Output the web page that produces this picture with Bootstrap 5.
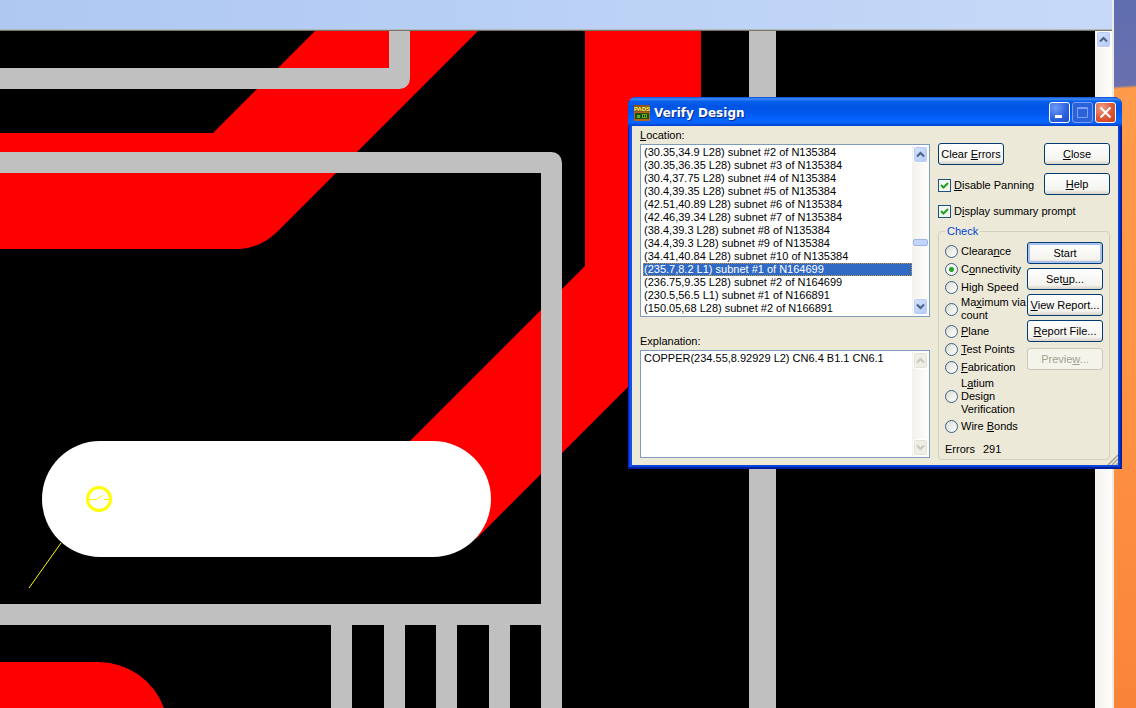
<!DOCTYPE html>
<html lang="en">
<head>
<meta charset="utf-8">
<meta name="viewport" content="width=device-width, initial-scale=1">
<title>Verify Design</title>
<link href="https://cdn.jsdelivr.net/npm/bootstrap@5.3.0/dist/css/bootstrap.min.css" rel="stylesheet">
<style>
:root { --face: #ece9d8; --ink: #000; --edge: #7f9db9; }
body { font: 11px/13px "Liberation Sans", Arial, sans-serif; color: var(--ink); background: #000; }
.toolbar-strip { height: 31px; background: linear-gradient(90deg, #aec8f2, #c6d9f8); border-bottom: 1px solid #77756c; box-shadow: inset 0 -1px #b5b8b8; }
.board { background: #000; min-width: 0; }
.desktop { width: 22px; background: linear-gradient(176deg, #5f6eaf 0, #6a6fae 86px, #ff9b4b 89px, #ff9445 50%, #f98438 100%); }
.app-frame { border-right: 2px solid #ecebe6; }

/* scroll bars */
.sbar { width: 17px; padding: 0 1px; background: linear-gradient(90deg, #f3f1ec, #fefefb); }
.sbar button { width: 15px; height: 17px; padding: 0; border: 1px solid #fff; border-radius: 3px; background: linear-gradient(135deg, #d6e3fd, #b4c9f6); box-shadow: inset 0 0 0 1px #b9cbf3; display: flex; align-items: center; justify-content: center; }
.sbar button:disabled { background: #efeee6; box-shadow: inset 0 0 0 1px #e4e2d8; }
.sbar svg { stroke: #4d6185; }
.sbar button:disabled svg { stroke: #c9c7ba; }
.thumb { height: 7px; background: #c3d5fc; border: 1px solid #9fb5e6; border-radius: 2px; }

/* dialog window */
.dialog-win { top: 97px; right: 14px; width: 494px; border-radius: 8px 8px 0 0; padding: 0 4px 4px; background: linear-gradient(90deg, #0019cf, #1660f0 3px, #0a45d8 4px, #0a45d8 calc(100% - 4px), #0a3fe0 calc(100% - 3px), #00138c); box-shadow: inset 0 -2px #001ea0; }
.title-strip { height: 29px; margin: 0 -4px; padding: 2px 6px 0; border-radius: 8px 8px 0 0; background: linear-gradient(#0a4ad0 0, #3f8cf8 2px, #0a62ec 4px, #0054e3 9px, #0258ee 16px, #0566ff 24px, #0560f8 26px, #0040c8 29px); }
.title-strip h1 { font: bold 12px/16px "DejaVu Sans", sans-serif; color: #fff; text-shadow: 1px 1px #0a2a80; }
.cap-group { gap: 2px; }
.cap { width: 21px; height: 21px; padding: 0; border: 1px solid #fff; border-radius: 3px; background: radial-gradient(circle at 30% 25%, #6e9bf5, #2a5fe0 60%, #1c4ed0); display: flex; align-items: center; justify-content: center; }
.cap:disabled { background: #2a62dc; border-color: #7e9ff0; }
.cap-close { background: radial-gradient(circle at 30% 25%, #f0a088, #e05a38 50%, #c83c18); }
.face { background: var(--face); padding: 3px 8px 5px; column-gap: 8px; }
.list-col { flex: 1 1 0; min-width: 0; }
.right-col { width: 172px; }
.loc-label { height: 15px; }
.expl-label { padding: 18px 0 2px; }
.sunk { background: #fff; border: 1px solid var(--edge); padding: 1px 0 1px 2px; }
.sunk select, .sunk textarea { flex: 1 1 0; min-width: 0; border: 0; padding: 0; margin: 0; outline: 0; background: #fff; color: #000; font: inherit; overflow: hidden; resize: none; border-radius: 0; }
.sunk select { height: 169px; scrollbar-width: none; }
.sunk select::-webkit-scrollbar { display: none; }
.sunk option { padding: 0 1px; height: 13px; min-height: 13px; line-height: 13px; }
.sunk option:checked { background: linear-gradient(#316ac5, #316ac5); -webkit-text-fill-color: #fff; outline: 1px dotted #c8963c; outline-offset: -1px; }
.sunk textarea { height: 104px; padding: 0 1px; }
.xp-btn { height: 22px; padding: 0; font: inherit; color: #000; border: 1px solid #003c74; border-radius: 3px; background: linear-gradient(#fff, #f4f3ee 80%, #d8d2c6); white-space: nowrap; }
.xp-btn.is-default { box-shadow: inset 0 0 0 2px #a9c2f0; }
.xp-btn:disabled { color: #a1a192; border-color: #c9c7ba; background: #f5f4ea; }
.w-top { width: 66px; }
.top-row { padding-top: 14px; }
.chk { column-gap: 3px; white-space: nowrap; }
.chk-pan { margin-top: 14px; }
.chk-sum { margin-top: 10px; }
.tick { appearance: none; flex: none; width: 13px; height: 13px; margin: 0; border: 1px solid #1c5180; background: #f3f3ee; }
input.tick:checked { background: #f3f6f1 url("data:image/svg+xml,%3Csvg xmlns='http://www.w3.org/2000/svg' viewBox='0 0 11 11'%3E%3Cpath d='M2 5l2.500 2.500 4.500-4.500' fill='none' stroke='%2321a121' stroke-width='2'/%3E%3C/svg%3E") center/11px; }
.dot { appearance: none; flex: none; width: 13px; height: 13px; margin: 0; border: 1px solid #3b5f87; border-radius: 50%; background: linear-gradient(135deg, #dcdcd4, #fff); }
.dot:checked { background: radial-gradient(circle, #21a121 2px, #f5f5f1 3px); }
.check-set { border: 1px solid #d0d0bf; border-radius: 4px; padding: 0 6px 2px; margin-top: 7px; height: 235px; }
.check-set legend { float: none; width: auto; font: inherit; color: #0046d5; margin: 0 0 4px; padding: 0 2px; height: 13px; }
.opt { min-height: 18px; column-gap: 3px; white-space: nowrap; }
.opt-tall { padding: 1px 0; }
.cmds { width: 76px; row-gap: 4px; }
.cmd-last { margin-top: 2px; }
.names { flex: 1 1 0; min-width: 0; }
.grip { right: 4px; bottom: 4px; }
</style>
</head>
<body class="vh-100 overflow-hidden">
<div class="d-flex h-100">
  <main class="app-frame d-flex flex-column flex-grow-1">
    <div class="toolbar-strip flex-shrink-0"></div>
    <div class="d-flex flex-grow-1 overflow-hidden">
      <div class="board flex-grow-1 overflow-hidden">
        <svg class="d-block w-100 h-100" viewBox="0 31 1095 677" preserveAspectRatio="xMinYMin slice" aria-label="Board layout">
          <g fill="#f00">
            <path d="M0 133H213L315 31H478L277 232Q260 248 240 249H0Z"/>
            <path d="M585 31H701V314L476 539L393 458L585 266Z"/>
            <path d="M0 662H98A70 70 0 0 1 164 708H0Z"/>
          </g>
          <g fill="none" stroke="#c0c0c0" stroke-width="21" stroke-linejoin="round">
            <path d="M-20 78.500H399.500V20M-20 162.500H551.500V720M-20 614.500H551M341.500 614V720M394.500 614V720M446.500 614V720M499.500 614V720"/>
            <path d="M762.500 20V720" stroke-width="27"/>
          </g>
          <rect x="42" y="441" width="449" height="116" rx="58" fill="#fff"/>
          <g fill="none" stroke="#ff0">
            <circle cx="99" cy="499" r="11.500" stroke-width="3"/>
            <path d="M88 499.500H96L103 495.500M104 499.500H110M61 543L29 588"/>
          </g>
        </svg>
      </div>
      <div class="sbar d-flex flex-column flex-shrink-0">
        <button type="button" aria-label="Scroll up"><svg width="9" height="7" fill="none" stroke-width="2"><path d="M1 5.500L4.500 2L8 5.500"/></svg></button>
      </div>
    </div>
  </main>
  <div class="desktop flex-shrink-0"></div>
</div>

<section class="dialog-win position-absolute" role="dialog" aria-labelledby="dlg-title">
  <header class="title-strip d-flex align-items-center">
    <svg width="16" height="16" aria-hidden="true">
      <rect width="16" height="16" fill="#8a5a14"/><rect y="7" width="16" height="9" fill="#b5651a"/>
      <rect x="1" y="8" width="14" height="6" fill="#1c4f10"/><path d="M3 10h3v3H3zM8 9h5v4H8z" fill="#5fae2c"/><path d="M9 10h1v2H9zM11 10h1v2h-1z" fill="#12300a"/>
      <text x="0" y="6" font-family="Liberation Sans" font-weight="bold" font-size="6" fill="#fff36a">PADS</text>
    </svg>
    <h1 class="m-0 ms-1 flex-grow-1" id="dlg-title">Verify Design</h1>
    <div class="cap-group d-flex">
      <button class="cap" type="button" aria-label="Minimize"><svg width="13" height="13"><path d="M2 9h7v3H2z" fill="#fff"/></svg></button>
      <button class="cap" type="button" aria-label="Maximize" disabled><svg width="13" height="13" fill="none" stroke="#7fa0f2"><path d="M1.500 1.500h10v10h-10zM1 2.500h11"/></svg></button>
      <button class="cap cap-close" type="button" aria-label="Close window"><svg width="13" height="13" stroke="#fff" stroke-width="2"><path d="M1.500 1.500l10 10M11.500 1.500l-10 10"/></svg></button>
    </div>
  </header>
  <div class="face d-flex">
    <div class="list-col d-flex flex-column">
      <label for="loc" class="loc-label"><u>L</u>ocation:</label>
      <div class="sunk d-flex">
        <select id="loc" size="13">
          <option>(30.35,34.9 L28) subnet #2 of N135384</option>
          <option>(30.35,36.35 L28) subnet #3 of N135384</option>
          <option>(30.4,37.75 L28) subnet #4 of N135384</option>
          <option>(30.4,39.35 L28) subnet #5 of N135384</option>
          <option>(42.51,40.89 L28) subnet #6 of N135384</option>
          <option>(42.46,39.34 L28) subnet #7 of N135384</option>
          <option>(38.4,39.3 L28) subnet #8 of N135384</option>
          <option>(34.4,39.3 L28) subnet #9 of N135384</option>
          <option>(34.41,40.84 L28) subnet #10 of N135384</option>
          <option selected>(235.7,8.2 L1) subnet #1 of N164699</option>
          <option>(236.75,9.35 L28) subnet #2 of N164699</option>
          <option>(230.5,56.5 L1) subnet #1 of N166891</option>
          <option>(150.05,68 L28) subnet #2 of N166891</option>
        </select>
        <div class="sbar d-flex flex-column">
          <button type="button" aria-label="Up"><svg width="9" height="7" fill="none" stroke-width="2"><path d="M1 5.500L4.500 2L8 5.500"/></svg></button>
          <div class="flex-grow-1 d-flex flex-column justify-content-end pb-5"><div class="thumb mb-1"></div></div>
          <button type="button" aria-label="Down"><svg width="9" height="7" fill="none" stroke-width="2"><path d="M1 1.500L4.500 5L8 1.500"/></svg></button>
        </div>
      </div>
      <label for="expl" class="expl-label">Explanation:</label>
      <div class="sunk d-flex">
        <textarea id="expl" readonly>COPPER(234.55,8.92929 L2) CN6.4 B1.1 CN6.1</textarea>
        <div class="sbar d-flex flex-column justify-content-between">
          <button type="button" aria-label="Up" disabled><svg width="9" height="7" fill="none" stroke-width="2"><path d="M1 5.500L4.500 2L8 5.500"/></svg></button>
          <button type="button" aria-label="Down" disabled><svg width="9" height="7" fill="none" stroke-width="2"><path d="M1 1.500L4.500 5L8 1.500"/></svg></button>
        </div>
      </div>
    </div>
    <div class="right-col d-flex flex-column">
      <div class="top-row d-flex justify-content-between">
        <div>
          <button class="xp-btn w-top" type="button">Clear <u>E</u>rrors</button>
          <label class="chk chk-pan d-flex align-items-center"><input class="tick" type="checkbox" checked><span><u>D</u>isable Panning</span></label>
        </div>
        <div class="d-flex flex-column gap-2">
          <button class="xp-btn w-top" type="button"><u>C</u>lose</button>
          <button class="xp-btn w-top" type="button"><u>H</u>elp</button>
        </div>
      </div>
      <label class="chk chk-sum d-flex align-items-center"><input class="tick" type="checkbox" checked><span>D<u>i</u>splay summary prompt</span></label>
      <fieldset class="check-set">
        <legend>Check</legend>
        <div class="d-flex">
          <div class="names d-flex flex-column">
            <label class="opt d-flex align-items-center"><input class="dot" type="radio" name="check"><span>Cleara<u>n</u>ce</span></label>
            <label class="opt d-flex align-items-center"><input class="dot" type="radio" name="check" checked><span>C<u>o</u>nnectivity</span></label>
            <label class="opt d-flex align-items-center"><input class="dot" type="radio" name="check"><span>Hi<u>g</u>h Speed</span></label>
            <label class="opt d-flex align-items-center"><input class="dot" type="radio" name="check"><span>Ma<u>x</u>imum via<br>count</span></label>
            <label class="opt d-flex align-items-center"><input class="dot" type="radio" name="check"><span><u>P</u>lane</span></label>
            <label class="opt d-flex align-items-center"><input class="dot" type="radio" name="check"><span><u>T</u>est Points</span></label>
            <label class="opt d-flex align-items-center"><input class="dot" type="radio" name="check"><span><u>F</u>abrication</span></label>
            <label class="opt opt-tall d-flex align-items-center"><input class="dot" type="radio" name="check"><span>L<u>a</u>tium<br>Design<br>Verification</span></label>
            <label class="opt d-flex align-items-center"><input class="dot" type="radio" name="check"><span>Wire <u>B</u>onds</span></label>
          </div>
          <div class="cmds d-flex flex-column flex-shrink-0">
            <button class="xp-btn is-default" type="button">Start</button>
            <button class="xp-btn" type="button">Set<u>u</u>p...</button>
            <button class="xp-btn" type="button"><u>V</u>iew Report...</button>
            <button class="xp-btn" type="button"><u>R</u>eport File...</button>
            <button class="xp-btn cmd-last" type="button" disabled>Previe<u>w</u>...</button>
          </div>
        </div>
        <div class="d-flex gap-2 pt-2"><span>Errors</span><span>291</span></div>
      </fieldset>
    </div>
  </div>
  <svg class="grip position-absolute" width="11" height="11" stroke="#a5a294" stroke-width="1.500" aria-hidden="true"><path d="M1 11L11 1M5 11L11 5M9 11L11 9"/></svg>
</section>
<script src="https://cdn.jsdelivr.net/npm/bootstrap@5.3.0/dist/js/bootstrap.bundle.min.js"></script>
</body>
</html>
